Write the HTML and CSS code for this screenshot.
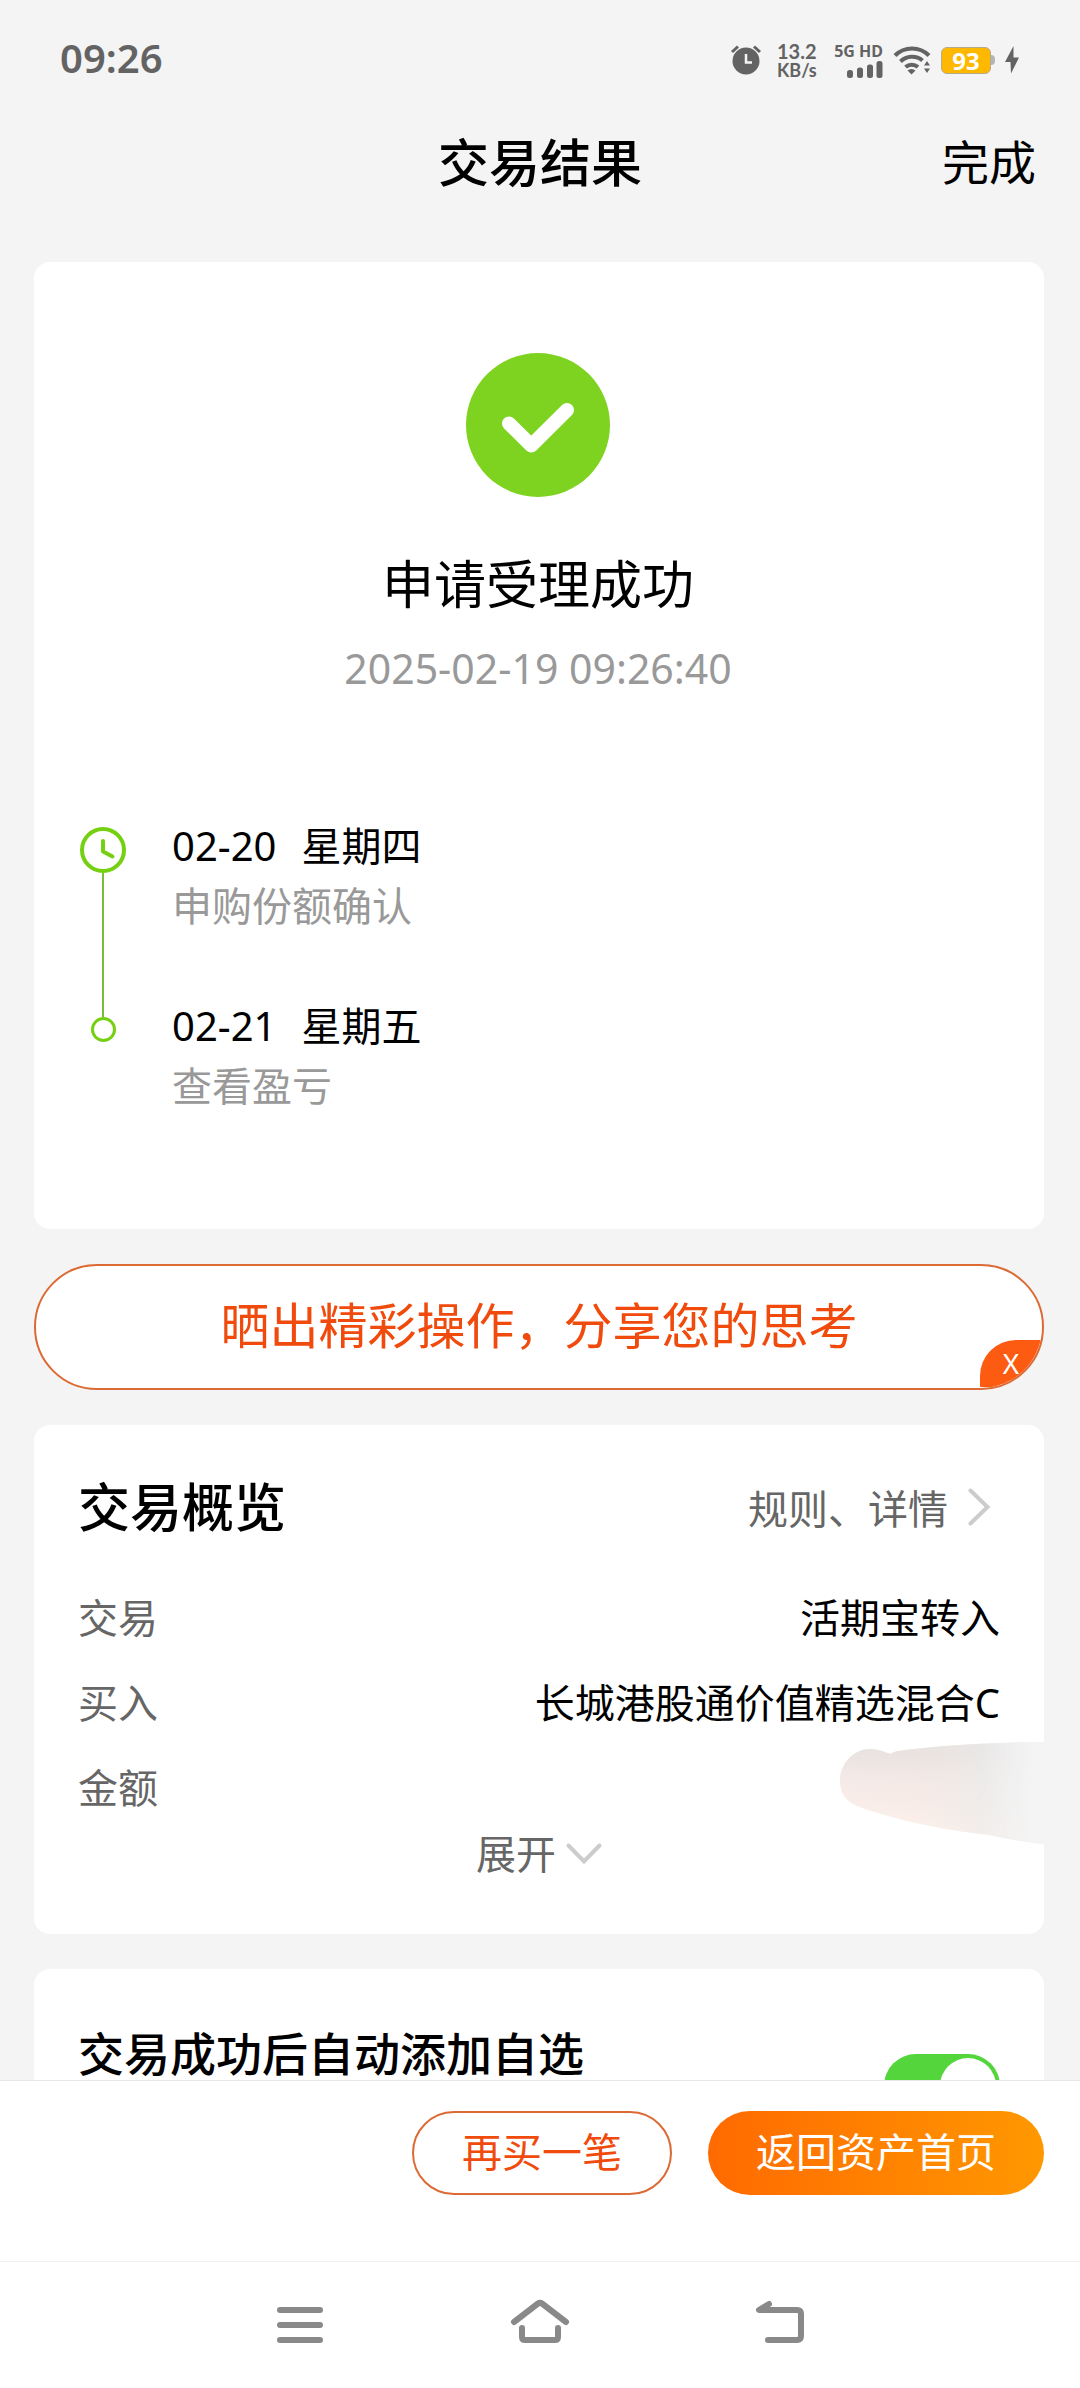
FILE: index.html
```html
<!DOCTYPE html>
<html lang="zh-CN">
<head>
<meta charset="utf-8">
<meta name="viewport" content="width=device-width, initial-scale=1">
<title>交易结果</title>
<link rel="stylesheet" href="styles.css">
</head>
<body>
<div class="app">
  <div class="status">
    <time class="status-time">09:26</time>
    <div class="status-icons">
      <svg class="alarm" viewBox="0 0 36 30" fill="none" stroke="#636363" aria-hidden="true">
        <circle cx="15" cy="16" r="13.5" fill="#636363" stroke="none"/>
        <path d="M1 7 7 1.500M23 1.500l6 5.500" stroke-width="3"/>
        <path d="M15 9v8.500H21" stroke="#f4f4f4" stroke-width="2.500"/>
      </svg>
      <div class="speed"><span class="speed-value">13.2</span><span class="speed-unit">KB/s</span></div>
      <div class="signal">
        <span class="signal-label">5G HD</span>
        <svg width="36" height="17" viewBox="0 0 36 17" fill="#636363" aria-hidden="true">
          <rect x="0" y="9" width="6" height="8" rx="2.500"/><rect x="10" y="6.500" width="6" height="10.500" rx="2.500"/><rect x="20" y="3.500" width="6" height="13.500" rx="2.500"/><rect x="29.500" y="0" width="6" height="17" rx="2.500"/>
        </svg>
      </div>
      <svg class="wifi" viewBox="0 0 38 30" fill="none" stroke="#636363" stroke-width="4" aria-hidden="true">
        <path d="M2 10.500a24 24 0 0 1 34 0"/>
        <path d="M7.500 16.500a16.500 16.500 0 0 1 22 -1"/>
        <path d="M12.500 22a9.500 9.500 0 0 1 12.500 0"/>
        <path d="M18.500 29.500l-4-4a6 6 0 0 1 8 0zM31 20.500l3-4.500 3 4.500zM31 23.500h6l-3 4.500z" fill="#636363" stroke="none"/>
      </svg>
      <div class="battery"><span class="battery-level">93</span><span class="battery-tip"></span></div>
      <svg class="bolt" viewBox="0 0 14 28" aria-hidden="true"><path d="M8.500 0 0 16h5.500L6 27.500 14 11.500H8.500z" fill="#636363"/></svg>
    </div>
  </div>

  <header class="header">
    <h1 class="header-title">交易结果</h1>
    <button class="header-done" type="button">完成</button>
  </header>

  <main class="content">
    <section class="card result">
      <svg class="result-icon" viewBox="0 0 144 144" aria-hidden="true">
        <circle cx="72" cy="72" r="72" fill="#7ed321"/>
        <path d="M43 70.500 65.300 92.500 101 57" fill="none" stroke="#fff" stroke-width="14" stroke-linecap="round" stroke-linejoin="round"/>
      </svg>
      <h2 class="result-title">申请受理成功</h2>
      <time class="result-time">2025-02-19 09:26:40</time>
      <ol class="timeline">
        <li class="step">
          <span class="rail rail-first">
            <svg class="clock" viewBox="0 0 46 46" fill="none" stroke="#74d011" stroke-width="4" stroke-linecap="round" stroke-linejoin="round" aria-hidden="true"><circle cx="23" cy="23" r="21"/><path d="M23 14v10.500l9.500 5"/></svg>
            <span class="rail-line"></span>
          </span>
          <div class="step-text"><p class="step-date"><span>02-20</span><span>星期四</span></p><p class="step-note">申购份额确认</p></div>
        </li>
        <li class="step">
          <span class="rail">
            <span class="rail-line rail-lead"></span>
            <span class="rail-dot"></span>
          </span>
          <div class="step-text"><p class="step-date"><span>02-21</span><span>星期五</span></p><p class="step-note">查看盈亏</p></div>
        </li>
      </ol>
    </section>

    <div class="share">
      <button class="share-main" type="button">晒出精彩操作，分享您的思考</button>
      <button class="share-close" type="button" aria-label="关闭">X</button>
    </div>

    <section class="card overview">
      <div class="overview-head">
        <h2 class="overview-title">交易概览</h2>
        <a class="overview-link" href="#">规则、详情
          <svg width="22" height="38" viewBox="0 0 22 38" fill="none" stroke="#ccc" stroke-width="4" stroke-linecap="round" aria-hidden="true"><path d="M2.500 2.500 19.500 19 2.500 35.500"/></svg>
        </a>
      </div>
      <dl class="rows">
        <div class="row"><dt>交易</dt><dd>活期宝转入</dd></div>
        <div class="row"><dt>买入</dt><dd>长城港股通价值精选混合C</dd></div>
        <div class="row"><dt>金额</dt><dd></dd></div>
      </dl>
      <button class="expand" type="button">展开
        <svg width="36" height="22" viewBox="0 0 36 22" fill="none" stroke="#ccc" stroke-width="4" stroke-linecap="round" aria-hidden="true"><path d="M2.500 2.500 18 18.500 33.500 2.500"/></svg>
      </button>
      <svg class="smudge" viewBox="0 0 240 116" aria-hidden="true">
        <defs>
          <linearGradient id="tone" x1="0" x2="1" y1="0" y2="0"><stop offset="0" stop-color="#f5ebe9"/><stop offset=".35" stop-color="#f2e8e4"/><stop offset=".58" stop-color="#ebebea"/><stop offset=".7" stop-color="#f1f1f1"/><stop offset=".8" stop-color="#f4f4f4"/></linearGradient>
          <linearGradient id="shine" x1="0" x2="0" y1="0" y2="1"><stop offset=".1" stop-color="#e4dfde" stop-opacity=".7"/><stop offset=".5" stop-color="#fff0ea" stop-opacity=".4"/><stop offset=".85" stop-color="#fff4ee" stop-opacity=".9"/></linearGradient>
          <linearGradient id="reach" x1="0" x2="1" y1="0" y2="0"><stop offset=".3" stop-color="#fff"/><stop offset=".8" stop-color="#000"/></linearGradient>
          <mask id="fade"><rect width="240" height="116" fill="url(#reach)"/></mask>
        </defs>
        <path d="M0 40C0 22 14 8 30 8c8 0 14 3 21 5 3-3 8-3 14-4C100 5 150 1 205 1h35v114C225 103 190 104 150 94 100 89 50 77 20 66 8 62 0 54 0 40z" fill="url(#tone)"/>
        <path d="M0 40C0 22 14 8 30 8c8 0 14 3 21 5 3-3 8-3 14-4C100 5 150 1 205 1h35v114C225 103 190 104 150 94 100 89 50 77 20 66 8 62 0 54 0 40z" fill="url(#shine)" mask="url(#fade)"/>
      </svg>
    </section>

    <section class="card watch">
      <label class="watch-label" for="auto-watch">交易成功后自动添加自选</label>
      <input class="toggle" id="auto-watch" type="checkbox" role="switch" checked>
    </section>
  </main>

  <footer class="actions">
    <button class="btn btn-outline" type="button">再买一笔</button>
    <button class="btn btn-primary" type="button">返回资产首页</button>
  </footer>

  <nav class="sysnav">
    <button type="button" aria-label="最近任务"><svg width="60" height="46" viewBox="0 0 60 46" fill="none" stroke="#898989" stroke-width="6" stroke-linecap="round"><path d="M10 8h40M10 23h40M10 38h40"/></svg></button>
    <button type="button" aria-label="主页"><svg width="60" height="46" viewBox="0 0 60 46" fill="none" stroke="#898989" stroke-width="6" stroke-linecap="round" stroke-linejoin="round"><path d="M4 20 28 1.500q2-1.500 4 0L56 20M12 26v9q0 3 3 3h30q3 0 3-3v-9"/></svg></button>
    <button type="button" aria-label="返回"><svg width="60" height="46" viewBox="0 0 60 46" fill="none" stroke="#898989" stroke-width="6" stroke-linecap="round" stroke-linejoin="round"><path d="M19 2 9 8h38q4 0 4 4v22q0 4-4 4H18"/></svg></button>
  </nav>
</div>
</body>
</html>
```
FILE: styles.css
```css
* { box-sizing: border-box; }

body, h1, h2, p, ol, dl, dd {
  margin: 0;
  padding: 0;
}

body {
  background: #f4f4f4;
  color: #000;
  font-family: "Noto Sans", "Noto Sans CJK SC", sans-serif;
  font-size: 40px;
}

button {
  border: 0;
  padding: 0;
  background: none;
  color: inherit;
  font: inherit;
  cursor: pointer;
}

svg { display: block; flex: none; overflow: visible; }

.app {
  display: flex;
  flex-direction: column;
  height: 100vh;
}

/* Status bar */
.status {
  display: flex;
  flex: none;
  align-items: center;
  justify-content: space-between;
  height: 120px;
  padding: 0 61px 0 60px;
  color: #636363;
}

.status-time {
  padding-bottom: 4px;
  font-size: 40px;
  font-weight: 600;
  line-height: 60px;
}

.status-icons {
  display: flex;
  align-items: center;
  gap: 10px;
}

.alarm { width: 36px; height: 30px; }

.speed {
  display: flex;
  flex-direction: column;
  width: 47px;
  font-family: Lato, "Noto Sans", sans-serif;
  font-size: 18px;
  font-weight: 700;
  line-height: 18px;
}

.speed-value { font-size: 20px; line-height: 20px; }

.signal {
  display: flex;
  flex-direction: column;
  align-items: flex-end;
  width: 49px;
  gap: 2px;
}

.signal-label {
  font-size: 16px;
  font-weight: 700;
  line-height: 16px;
  white-space: nowrap;
}

.wifi { width: 38px; height: 30px; }

.battery { display: flex; align-items: center; }

.battery-level {
  width: 50px;
  border: 1px solid #b5aa8a;
  border-radius: 6px;
  background: #ffb800;
  color: #fff;
  font-size: 24px;
  font-weight: 700;
  line-height: 25px;
  text-align: center;
}

.battery-tip {
  width: 4px;
  height: 10px;
  border-radius: 0 4px 4px 0;
  background: #b5b5b5;
}

.bolt { width: 14px; height: 28px; }

/* Title bar */
.header {
  display: grid;
  flex: none;
  grid-template-columns: 1fr auto 1fr;
  align-items: center;
  height: 84px;
  padding: 0 44px;
}

.header-title {
  grid-column: 2;
  font-size: 51px;
  font-weight: 500;
  line-height: 72px;
}

.header-done {
  justify-self: end;
  font-size: 47px;
  line-height: 72px;
}

/* Scrolling content */
.content {
  display: flex;
  flex: 1;
  flex-direction: column;
  gap: 35px;
  min-height: 0;
  padding: 58px 36px 35px 34px;
  overflow-y: auto;
  scrollbar-width: none;
}

.card {
  flex: none;
  border-radius: 16px;
  background: #fff;
}

.result {
  display: flex;
  flex-direction: column;
  align-items: center;
  padding: 91px 48px 113px 46px;
}

.result-icon { width: 144px; height: 144px; }

.result-title {
  margin-top: 57px;
  font-size: 52px;
  font-weight: 400;
  line-height: 60px;
}

.result-time {
  margin-top: 30px;
  color: #999;
  font-size: 41px;
  line-height: 48px;
}

.timeline {
  align-self: stretch;
  margin-top: 124px;
  list-style: none;
}

.step { display: flex; gap: 46px; }

.step:not(:last-child) .step-text { padding-bottom: 60px; }

.rail {
  display: flex;
  flex-direction: column;
  align-items: center;
  width: 46px;
}

.rail-first { padding-top: 11px; }

.clock { width: 46px; height: 46px; }

.rail-line {
  flex: 1;
  width: 2px;
  background: #79bd3a;
}

.rail-lead { flex: none; height: 21px; }

.rail-dot {
  width: 25px;
  height: 25px;
  border: 3px solid #74d011;
  border-radius: 50%;
}

.step-date {
  display: flex;
  gap: 25px;
  line-height: 60px;
}

.step-note { color: #999; line-height: 60px; }

/* Share banner */
.share {
  position: relative;
  display: flex;
  flex: none;
  height: 126px;
  border: 2px solid #dc6a35;
  border-radius: 63px;
  background: #fff;
  overflow: hidden;
}

.share-main {
  flex: 1;
  padding-bottom: 4px;
  color: #f04a0c;
  font-size: 49px;
  line-height: 72px;
}

.share-close {
  position: absolute;
  right: 0;
  bottom: 1px;
  width: 62px;
  height: 47px;
  border-radius: 36px 0 0 0;
  background: #fd5a12;
  color: #fff;
  font-size: 28px;
  line-height: 47px;
}

/* Overview */
.overview {
  position: relative;
  display: flex;
  flex-direction: column;
  padding: 48px 44px 56px;
}

.overview-head {
  display: flex;
  align-items: center;
  justify-content: space-between;
  padding-right: 10px;
}

.overview-title {
  font-size: 52px;
  font-weight: 500;
  line-height: 68px;
}

.overview-link {
  display: flex;
  align-items: center;
  gap: 20px;
  color: #666;
  text-decoration: none;
}

.rows { margin-top: 34px; }

.row {
  display: flex;
  justify-content: space-between;
  line-height: 85px;
}

.row dt { color: #666; }

.expand {
  display: flex;
  align-items: center;
  align-self: center;
  gap: 10px;
  color: #666;
  line-height: 48px;
}

.smudge {
  position: absolute;
  top: 316px;
  right: -36px;
  width: 240px;
  height: 116px;
}

/* Watchlist switch */
.watch {
  display: flex;
  align-items: center;
  justify-content: space-between;
  padding: 50px 44px;
}

.watch-label {
  padding-bottom: 66px;
  font-size: 46px;
  font-weight: 500;
  line-height: 68px;
}

.toggle {
  display: flex;
  flex: none;
  align-items: center;
  justify-content: flex-end;
  width: 116px;
  height: 64px;
  margin: 0;
  padding: 4px;
  border-radius: 32px;
  background: #53d53b;
  appearance: none;
}

.toggle::before {
  width: 56px;
  height: 56px;
  border-radius: 50%;
  background: #fff;
  content: "";
}

.toggle:not(:checked) {
  justify-content: flex-start;
  background: #ddd;
}

/* Bottom actions */
.actions {
  display: flex;
  flex: none;
  justify-content: flex-end;
  gap: 36px;
  padding: 30px 36px 66px;
  border-top: 1px solid #e6e6e6;
  background: #fff;
}

.btn {
  height: 84px;
  padding: 0 48px 2px;
  border-radius: 42px;
  line-height: 78px;
}

.btn-outline {
  border: 2px solid #dc6a35;
  color: #f04a0c;
}

.btn-primary {
  background: linear-gradient(90deg, #ff6a00, #ff9800);
  color: #fff;
}

/* System navigation */
.sysnav {
  display: flex;
  flex: none;
  justify-content: center;
  height: 127px;
  border-top: 1px solid #f0f0f0;
  background: #fff;
}

.sysnav button {
  display: flex;
  align-items: center;
  justify-content: center;
  width: 240px;
}
```
